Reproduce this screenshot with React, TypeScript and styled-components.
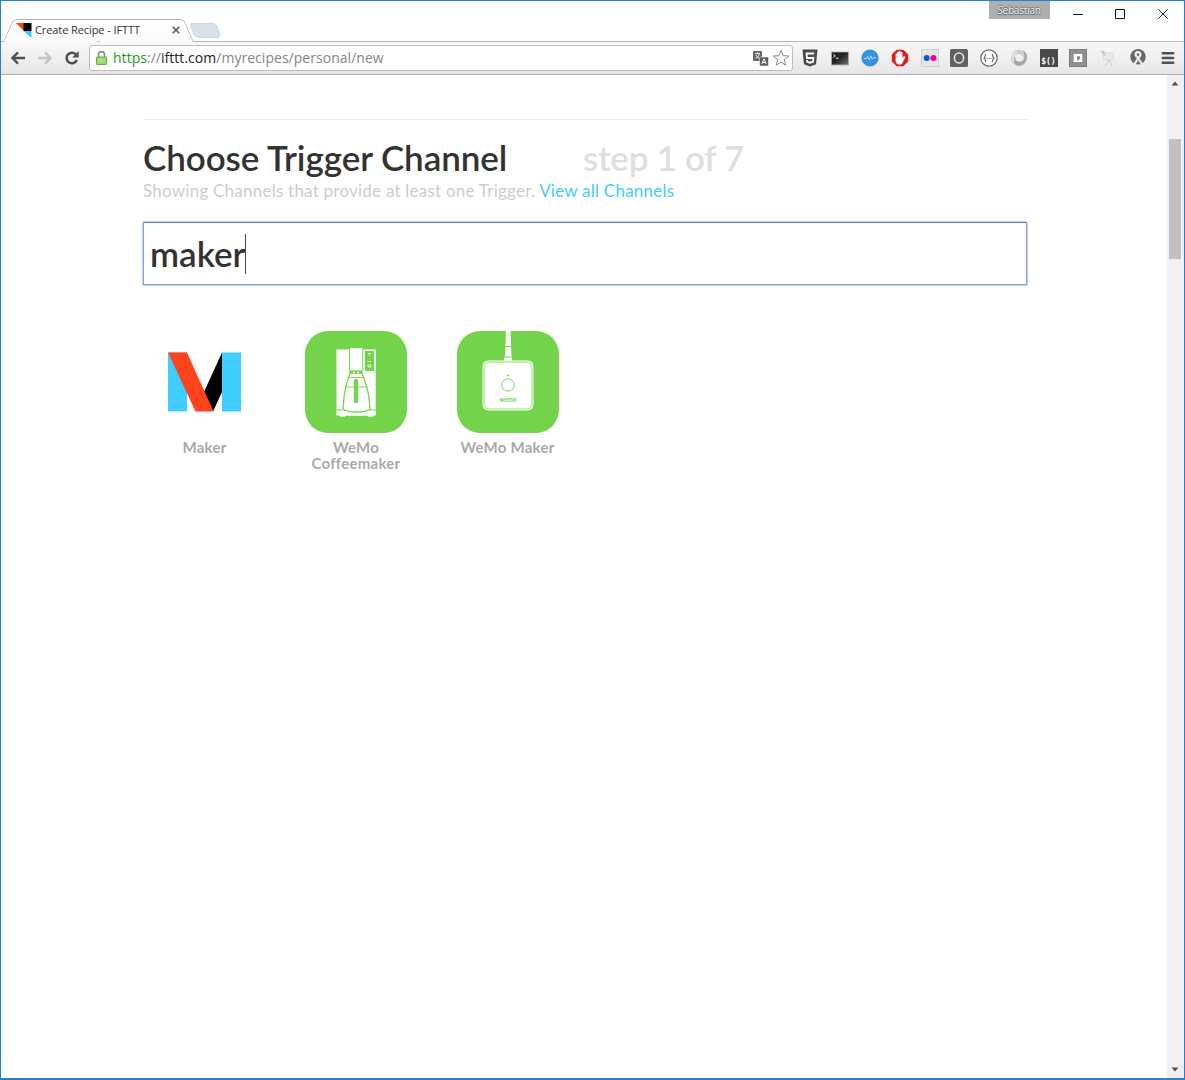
import React from 'react';
import styled, { createGlobalStyle } from 'styled-components';

const Global = createGlobalStyle`
  *, *::before, *::after { box-sizing: border-box; }
  html, body { margin: 0; padding: 0; background: #fff; overflow: hidden; }
  svg { display: block; }
`;

const Window = styled.div`
  display: flex;
  flex-direction: column;
  width: 1185px;
  height: 1080px;
  border: 1px solid #1c84d8;
  border-bottom-width: 2px;
  background: #fff;
  font-family: 'Lato', 'Liberation Sans', sans-serif;
`;

const TitleBar = styled.header`
  display: flex;
  justify-content: space-between;
  height: 40px;
`;

const TabStrip = styled.div`
  display: flex;
  align-items: flex-end;
  padding-left: 7px;
`;

const Tab = styled.div`
  position: relative;
  z-index: 1;
  display: flex;
  align-items: center;
  width: 181px;
  height: 22px;
  padding: 0 9px 0 8px;
  font: 11px/20px 'Open Sans', 'Noto Sans', sans-serif;
  color: #333;

  &::before, &::after {
    content: '';
    position: absolute;
    z-index: -1;
    top: 0;
    bottom: -1px;
    width: 52%;
    border-top: 1px solid #b4b4b4;
    background: linear-gradient(#fff, #fafafa);
  }
  &::before {
    left: 0;
    border-left: 1px solid #b0b0b0;
    border-top-left-radius: 5px;
    transform: skewX(-23deg);
  }
  &::after {
    right: 0;
    border-right: 1px solid #b0b0b0;
    border-top-right-radius: 5px;
    transform: skewX(23deg);
  }
`;

const TabTitle = styled.span`
  flex: 1;
  padding-left: 3px;
  white-space: nowrap;
  letter-spacing: -0.09px;
`;

const NewTab = styled.div`
  width: 27px;
  height: 15px;
  margin: 0 0 3px 3px;
  border: 1px solid #d0d5dc;
  border-radius: 3px 4px 4px 5px;
  background: #dae0e8;
  transform: skewX(18deg);
`;

const WindowControls = styled.div`
  display: flex;
  align-items: flex-start;
`;

const Profile = styled.div`
  width: 61px;
  height: 18px;
  margin-right: 7px;
  background: #aeaeae;
  color: #fff;
  font: 10px/18px 'Open Sans', 'Noto Sans', sans-serif;
  letter-spacing: -0.2px;
  text-align: center;
  text-shadow: 0 0 1px #444, 0 1px 1px #555, 0 -1px 1px #777;
`;

const ControlButton = styled.div`
  display: grid;
  place-items: center;
  width: 42.5px;
  height: 26px;
`;

const Toolbar = styled.nav`
  display: flex;
  align-items: center;
  height: 34px;
  border-top: 1px solid #b6b6b6;
  border-bottom: 1px solid #adadad;
  background: linear-gradient(#f8f8f8, #e6e6e6);
`;

const NavButtons = styled.div`
  display: flex;
  gap: 11px;
  padding-left: 9px;
  width: 88px;
`;

const AddressBar = styled.div`
  display: flex;
  align-items: center;
  width: 704px;
  height: 26px;
  padding: 0 2px 0 5px;
  border: 1px solid #bdbdbd;
  border-radius: 3px;
  background: #fff;
`;

const Url = styled.div`
  flex: 1;
  padding-left: 5px;
  color: #858585;
  font: 14px/22px 'Open Sans', 'Noto Sans', sans-serif;
  letter-spacing: 0.03px;
  white-space: nowrap;
`;

const Scheme = styled.span`
  color: #1a991a;
`;

const Host = styled.span`
  color: #222;
`;

const PageActions = styled.div`
  display: flex;
  align-items: center;
  gap: 3px;
`;

const Extensions = styled.div`
  display: grid;
  grid-template-columns: repeat(13, 29.78px);
  justify-items: center;
  padding-left: 2.6px;
`;

const Viewport = styled.div`
  display: flex;
  flex: 1;
  min-height: 0;
`;

const Page = styled.main`
  flex: 1;
  min-width: 0;
  padding: 44px 140px 0 142px;
`;

const Heading = styled.div`
  display: flex;
  align-items: baseline;
  padding-top: 15px;
  border-top: 1px solid #e8e8e8;
`;

const Title = styled.h1<{ $muted?: boolean }>`
  margin: 0;
  width: ${p => (p.$muted ? 'auto' : '440px')};
  color: ${p => (p.$muted ? '#dedede' : '#333')};
  font-size: 35px;
  font-weight: 600;
  line-height: 44px;
  letter-spacing: ${p => (p.$muted ? '-0.3px' : '-0.07px')};
  white-space: nowrap;
`;

const Subtitle = styled.p`
  margin: 0;
  padding-top: 2px;
  color: #ccc;
  font-size: 17px;
  line-height: 20px;
  letter-spacing: 0.23px;
  white-space: nowrap;
`;

const ChannelsLink = styled.a`
  color: #4cf;
`;

const SearchField = styled.div`
  display: flex;
  align-items: center;
  width: 884px;
  height: 63px;
  margin: 21px 0 1px;
  padding: 0 0 0 6px;
  border: 1px solid #7ea6ea;
  border-top-color: #5f80c2;
  border-radius: 1px;
  box-shadow: 0 0 0 1px #b9d0f7;
  color: #333;
  font-size: 35px;
  font-weight: 600;
  line-height: 60px;
`;

const Query = styled.span`
  margin-top: -1px;
`;

const Caret = styled.span`
  width: 1px;
  height: 40px;
  background: #444;
`;

const ChannelList = styled.ul`
  display: flex;
  gap: 49.5px;
  margin: 0;
  padding: 45px 0 0 10.5px;
  list-style: none;
`;

const Channel = styled.li`
  display: flex;
  flex-direction: column;
  align-items: center;
  width: 102px;
`;

const ChannelName = styled.span`
  margin-top: 6px;
  color: #aaa;
  font-size: 15px;
  font-weight: 700;
  line-height: 16px;
  letter-spacing: 0.25px;
  text-align: center;
`;

const Scrollbar = styled.aside`
  display: flex;
  flex-direction: column;
  flex-shrink: 0;
  align-items: center;
  justify-content: space-between;
  width: 17px;
  padding: 6px 1px 6px 0;
  background: #f0f0f0;
`;

const Thumb = styled.div`
  width: 12px;
  height: 120px;
  margin: 53px 0 auto;
  background: #c1c1c1;
`;

const ScrollArrow = ({ down = false }: { down?: boolean }) => (
  <svg width="8" height="5" viewBox="0 0 8 5">
    <path d={down ? 'M.5 .5h7L4 4.5z' : 'M.5 4.5h7L4 .5z'} fill="#505050" />
  </svg>
);

const Favicon = () => (
  <svg width="16" height="16" viewBox="0 0 16 16">
    <path d="M0 1h8v8z" fill="#ff4218" />
    <path d="M7.5 1H15.5v8h-8z" fill="#000" />
    <path d="M7.5 9h8v7z" fill="#33ccff" />
  </svg>
);

const TabClose = () => (
  <svg width="8" height="8" viewBox="0 0 8 8">
    <path d="M.7.7l6.6 6.6M7.3.7L.7 7.3" stroke="#5a5a5a" strokeWidth="1.6" />
  </svg>
);

const Arrow = ({ forward = false }: { forward?: boolean }) => (
  <svg width="16" height="16" viewBox="0 0 16 16">
    <g transform={forward ? 'translate(16 0) scale(-1 1)' : undefined} fill="none"
      stroke={forward ? '#c2c2c2' : '#505050'} strokeWidth="2.4">
      <path d="M2.5 8H15M8 2.4L2.4 8 8 13.6" />
    </g>
  </svg>
);

const Reload = () => (
  <svg width="16" height="16" viewBox="0 0 16 16">
    <path d="M12.8 10A5.3 5.3 0 1 1 11.8 4.4" fill="none" stroke="#505050" strokeWidth="2.5" />
    <path d="M14.7 1v6.4H8.3z" fill="#505050" />
  </svg>
);

const Lock = () => (
  <svg width="13" height="16" viewBox="0 0 13 16">
    <path d="M3.5 8V4.6a3 3 0 0 1 6 0V8" fill="none" stroke="#8d8d8d" strokeWidth="1.7" />
    <rect x="1.5" y="7" width="10" height="7.5" rx=".7" fill="#97d96a" stroke="#62ad3d" />
    <path d="M2.5 9.5h8M2.5 11.5h8" stroke="#b3e78e" />
  </svg>
);

const Translate = () => (
  <svg width="17" height="17" viewBox="0 0 17 17">
    <rect x="1" y="1" width="9" height="10" rx="1" fill="#666" />
    <path d="M3 3.6h5M5.5 2.4v1.2M3.5 8.5c2-1 3.3-2.6 3.7-4.6M3.8 5c.8 1.5 2 2.6 3.5 3.3" stroke="#fff" fill="none" strokeWidth=".9" />
    <rect x="7.5" y="7" width="9" height="9" rx="1" fill="#5d5d5d" stroke="#fff" strokeWidth=".5" />
    <path d="M9.7 14.2L12 8.8l2.3 5.4M10.5 12.5h3" stroke="#fff" fill="none" />
  </svg>
);

const Star = () => (
  <svg width="18" height="18" viewBox="0 0 18 18">
    <path d="M9 1.4l2 5.3 5.8.3-4.5 3.6 1.5 5.7L9 13.1l-4.8 3.2 1.5-5.7L1.2 7l5.8-.3z" fill="#fff" stroke="#8a8a8a" strokeWidth="1" />
  </svg>
);

const extensionIcons: React.ReactNode[] = [
  <>
    <path d="M1.5.5h15L15 15.3 9 17.5l-6-2.2z" fill="#454545" />
    <path d="M9 1.5h6.2L14 14.5l-5 1.7z" fill="#555" />
    <path d="M13 4.5H5.5L6 9h6.3l-.4 3.8L9 13.7l-2.8-.9L6 11" fill="none" stroke="#fff" strokeWidth="1.8" />
  </>,
  <>
    <defs><linearGradient id="term" x2="1" y2="1"><stop offset=".45" stopColor="#222" /><stop offset="1" stopColor="#777" /></linearGradient></defs>
    <rect x=".5" y="3" width="17" height="13" fill="url(#term)" stroke="#aaa" strokeWidth=".8" />
    <path d="M2.3 5.5l2 1.5-2 1.5M5 9.2h2.6" stroke="#fff" fill="none" strokeWidth=".9" />
  </>,
  <>
    <circle cx="9" cy="9" r="8.1" fill="#3193e3" stroke="#2379c2" strokeWidth=".7" />
    <path d="M3 9.5h2.4L6.7 7.6l1.6 3.2 1.6-4 1.3 3.4 1.2-1.4H15" stroke="#c7e6ff" fill="none" strokeWidth=".9" />
  </>,
  <>
    <path d="M5.6.8h6.8l4.8 4.8v6.8l-4.8 4.8H5.6L.8 12.4V5.6z" fill="#e31d1d" />
    <path d="M4.6 5.3c0-1 1.5-1 1.5 0V3.4c0-1.1 1.7-1.1 1.7 0V2.7c0-1.1 1.8-1.1 1.8 0v.7c0-1 1.8-1 1.8 0v5.6l1.2-1.6c.8-.9 2 0 1.5 1l-2.5 5.3c-.5 1.2-1.4 1.8-3.1 1.8-2.7 0-3.9-1.3-3.9-3.9z" fill="#fff" />
    <path d="M6.5 5v3.5M8.4 4v4.5M10.2 4.5v4" stroke="#f3a9a9" strokeWidth=".5" />
  </>,
  <>
    <rect x=".5" y=".5" width="17" height="17" fill="#e6e6e6" stroke="#d0d0d0" />
    <circle cx="5.7" cy="9" r="3" fill="#0a58d0" /><circle cx="12.4" cy="9" r="3" fill="#f40083" />
  </>,
  <>
    <rect width="18" height="18" rx="1.5" fill="#616161" />
    <ellipse cx="9" cy="9" rx="4.6" ry="5" fill="none" stroke="#e9eef2" strokeWidth="1.5" />
  </>,
  <>
    <circle cx="9" cy="9" r="8.2" fill="#fff" stroke="#686868" strokeWidth="1.2" />
    <path d="M6.3 5.3C4.6 5.3 5.9 8.2 4.2 9c1.7.8.4 3.7 2.1 3.7M11.7 5.3c1.7 0 .4 2.9 2.1 3.7-1.7.8-.4 3.7-2.1 3.7" stroke="#555" fill="none" strokeWidth="1.1" />
    <path d="M6.8 9.5h1M8.6 9.5h1M10.4 9.5h1" stroke="#666" />
  </>,
  <>
    <path d="M10 .7A8.4 8.4 0 0 0 4.2 15.5C3 10 4 5 8.2 5c3.4-.2 5 2 4.4 5C15 6 13.8 2 10 .7z" fill="#c9c9c9" />
    <path d="M12.4.9c5.6 2.5 6.3 9.5 1.8 13.9-3 3-7.6 2.8-9.4.5C2.8 12.5 3.5 9 5 7c0 4.4 2.2 6.3 5.3 5.7C14.8 11.5 15.4 5.7 12.4.9z" fill="#a6a6a6" />
    <path d="M6.8 3c-4 2-4.4 6-3 9.5" fill="none" stroke="#e6e6e6" strokeWidth="1.6" />
  </>,
  <>
    <rect width="18" height="18" fill="#484848" />
    <text x="1.2" y="15.3" fill="#fff" fontFamily="DejaVu Sans Mono, monospace" fontSize="9.5" fontWeight="700" textLength="14.5" lengthAdjust="spacingAndGlyphs">$()</text>
  </>,
  <>
    <rect x=".5" y=".5" width="17" height="17" fill="#909090" stroke="#7d7d7d" />
    <path d="M4.7 5h8.6v8H4.7z" fill="#fff" /><path d="M8.2 7.3h2.6v3H9.6v1.2H8.2z" fill="#7c7c7c" />
  </>,
  <>
    <path d="M3.5 3L14.5 4.2v7L4.5 10z" fill="#e9e9e9" stroke="#d6d6d6" strokeWidth=".8" />
    <path d="M1.2 1.5l4 .5 1.8 4-2 1z" fill="#c9c9c9" />
    <path d="M10 11l-3.5 6M10 11l3 5.5" stroke="#cdcdcd" fill="none" strokeWidth="1.1" />
  </>,
  <>
    <circle cx="9" cy="7.8" r="7.7" fill="#686868" />
    <path d="M4.4 16.5L11.2 6.5C12.6 1.9 5.4 1.9 6.8 6.5L13.6 16" fill="none" stroke="#f4f4f4" strokeWidth="2.2" />
    <path d="M8.2 9.8l4 5.8M6.8 7.5l1 1.8" stroke="#999" strokeWidth=".7" />
  </>,
  <path d="M3.8 4.2h10.4M3.8 9h10.4M3.8 13.8h10.4" stroke="#505050" strokeWidth="2.6" strokeLinecap="round" />,
];

const MakerIcon = () => (
  <svg width="102" height="102" viewBox="0 0 102 102">
    <path d="M14 21.5h19v59H14zM68 21.5h19v59H68z" fill="#40cdff" />
    <path d="M68 21.5V61l-9 19.5-9-19.5z" fill="#000" />
    <path d="M14 21.5h19l26.5 59H41.5z" fill="#ff431c" />
  </svg>
);

const CoffeemakerIcon = () => (
  <svg width="102" height="102" viewBox="0 0 102 102">
    <rect width="102" height="102" rx="23" fill="#73d44c" />
    <path d="M31.5 18.5h12.7V17h14v1.5h12.5V84.5H68v1.2h-5v-1h-23v1h-5v-1.2h-3.5z" fill="#fff" />
    <path d="M44.5 17v23h13.3V17M31.5 79h6M65 79h5.5" fill="none" stroke="#73d44c" />
    <rect x="60" y="20" width="9" height="20" fill="#73d44c" />
    <path d="M64.5 22v3M63 22.5h3M62.5 30.5h4M63 34h3v2h-3z" stroke="#dff7d4" fill="none" />
    <path d="M45 42h12c3 10 7 14 8 36-5 4-22 4-27 0 1-22 4-26 7-36z" fill="#fff" stroke="#73d44c" strokeWidth="1.3" />
    <path d="M43.5 46.5h15M39.5 56h23" stroke="#73d44c" strokeWidth=".9" />
    <path d="M51 50v20" stroke="#73d44c" strokeWidth="4.4" strokeLinecap="round" />
    <path d="M44.5 41h13" stroke="#73d44c" strokeWidth="2.5" />
    <path d="M48 41.5h1.5M52.5 41.5H54" stroke="#fff" strokeWidth="1.5" />
  </svg>
);

const WemoMakerIcon = () => (
  <svg width="102" height="102" viewBox="0 0 102 102">
    <rect width="102" height="102" rx="23" fill="#73d44c" />
    <path d="M49 0h4.5l1 26H55v4h-8v-4h1z" fill="#fff" />
    <path d="M48 15.5h6.5M47.5 26h7" stroke="#73d44c" />
    <rect x="25.5" y="29.5" width="51" height="50" rx="6" fill="#fff" />
    <rect x="27" y="31" width="48" height="47" rx="5" fill="none" stroke="#73d44c" strokeWidth=".8" />
    <circle cx="51" cy="54" r="6.2" fill="none" stroke="#73d44c" strokeWidth=".9" />
    <circle cx="51" cy="44.5" r="1" fill="#73d44c" />
    <text x="51" y="71" textAnchor="middle" fill="#73d44c" fontFamily="Lato, sans-serif" fontWeight="700" fontSize="6.5" textLength="17" lengthAdjust="spacingAndGlyphs">wemo</text>
  </svg>
);

const channels = [
  { name: 'Maker', Icon: MakerIcon },
  { name: 'WeMo Coffeemaker', Icon: CoffeemakerIcon },
  { name: 'WeMo Maker', Icon: WemoMakerIcon },
];

export default function App() {
  return (
    <>
      <Global />
      <Window>
        <TitleBar>
          <TabStrip>
            <Tab><Favicon /><TabTitle>Create Recipe - IFTTT</TabTitle><TabClose /></Tab>
            <NewTab />
          </TabStrip>
          <WindowControls>
            <Profile>Sebastian</Profile>
            <ControlButton><svg width="10" height="11"><path d="M0 5.5h10" stroke="#111" /></svg></ControlButton>
            <ControlButton><svg width="10" height="10"><path d="M.5.5h9v9h-9z" fill="none" stroke="#111" /></svg></ControlButton>
            <ControlButton><svg width="10" height="10"><path d="M.3.3l9.4 9.4M9.7.3L.3 9.7" stroke="#222" /></svg></ControlButton>
          </WindowControls>
        </TitleBar>
        <Toolbar>
          <NavButtons><Arrow /><Arrow forward /><Reload /></NavButtons>
          <AddressBar>
            <Lock />
            <Url><Scheme>https</Scheme>://<Host>ifttt.com</Host>/myrecipes/personal/new</Url>
            <PageActions><Translate /><Star /></PageActions>
          </AddressBar>
          <Extensions>
            {extensionIcons.map((icon, i) => (
              <svg key={i} width="18" height="18" viewBox="0 0 18 18">{icon}</svg>
            ))}
          </Extensions>
        </Toolbar>
        <Viewport>
          <Page>
            <Heading>
              <Title>Choose Trigger Channel</Title>
              <Title as="span" $muted>step 1 of 7</Title>
            </Heading>
            <Subtitle>
              Showing Channels that provide at least one Trigger. <ChannelsLink>View all Channels</ChannelsLink>
            </Subtitle>
            <SearchField><Query>maker</Query><Caret /></SearchField>
            <ChannelList>
              {channels.map(({ name, Icon }) => (
                <Channel key={name}><Icon /><ChannelName>{name}</ChannelName></Channel>
              ))}
            </ChannelList>
          </Page>
          <Scrollbar><ScrollArrow /><Thumb /><ScrollArrow down /></Scrollbar>
        </Viewport>
      </Window>
    </>
  );
}
